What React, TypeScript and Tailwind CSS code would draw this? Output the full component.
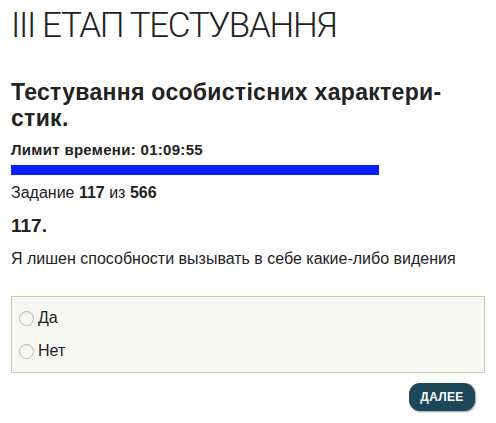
import React, { useState } from 'react';

const options = ['Да', 'Нет'];

const App = () => {
  const [answer, setAnswer] = useState<string | null>(null);

  return (
    <div className="min-h-screen bg-white px-[11px] pt-[7px] text-[#222] font-['Liberation_Sans',sans-serif]">
      <h1 className="text-[35px] leading-[38px] font-light tracking-[-1.35px] font-['Roboto',sans-serif]">III ЕТАП ТЕСТУВАННЯ</h1>

      <h2 className="mt-[34px] text-[23px] leading-[26px] font-bold tracking-[0.3px]">
        Тестування особистісних характери-<br />стик.
      </h2>

      <div className="mt-[10px] text-[15px] leading-[18px] font-bold tracking-[0.3px]">Лимит времени: 01:09:55</div>
      <div className="mt-[6px] h-[10px] w-[368px] bg-[#0a1eff]" />

      <div className="mt-[9px] text-[16px] leading-[18px]">
        Задание <b className="font-bold">117</b> из <b className="font-bold">566</b>
      </div>
      <div className="mt-[13px] text-[19px] leading-[22px] font-bold">117.</div>
      <p className="mt-[13px] text-[16px] leading-[18px]">Я лишен способности вызывать в себе какие-либо видения</p>

      <div className="mt-[28px] border border-[#c6d19e] bg-[#f7f8f3] px-[7px] py-[11px] flex flex-col gap-[13px]">
        {options.map((o) => (
          <label key={o} className="flex items-center gap-[4px] text-[16px] leading-[20px] cursor-pointer">
            <span
              onClick={() => setAnswer(o)}
              className="w-[15px] h-[15px] rounded-full border border-[#b5b5b5] bg-gradient-to-b from-[#f0f0f0] to-white flex items-center justify-center"
            >
              {answer === o && <span className="w-[7px] h-[7px] rounded-full bg-[#333]" />}
            </span>
            {o}
          </label>
        ))}
      </div>

      <div className="mt-[10px] flex justify-end pr-[10px]">
        <button className="h-[28px] w-[66px] rounded-[11px] bg-[#1b4759] text-white text-[12px] font-bold tracking-[0.3px] shadow-[1px_1px_2px_rgba(0,0,0,0.4)]">
          ДАЛЕЕ
        </button>
      </div>
    </div>
  );
};

export default App;
